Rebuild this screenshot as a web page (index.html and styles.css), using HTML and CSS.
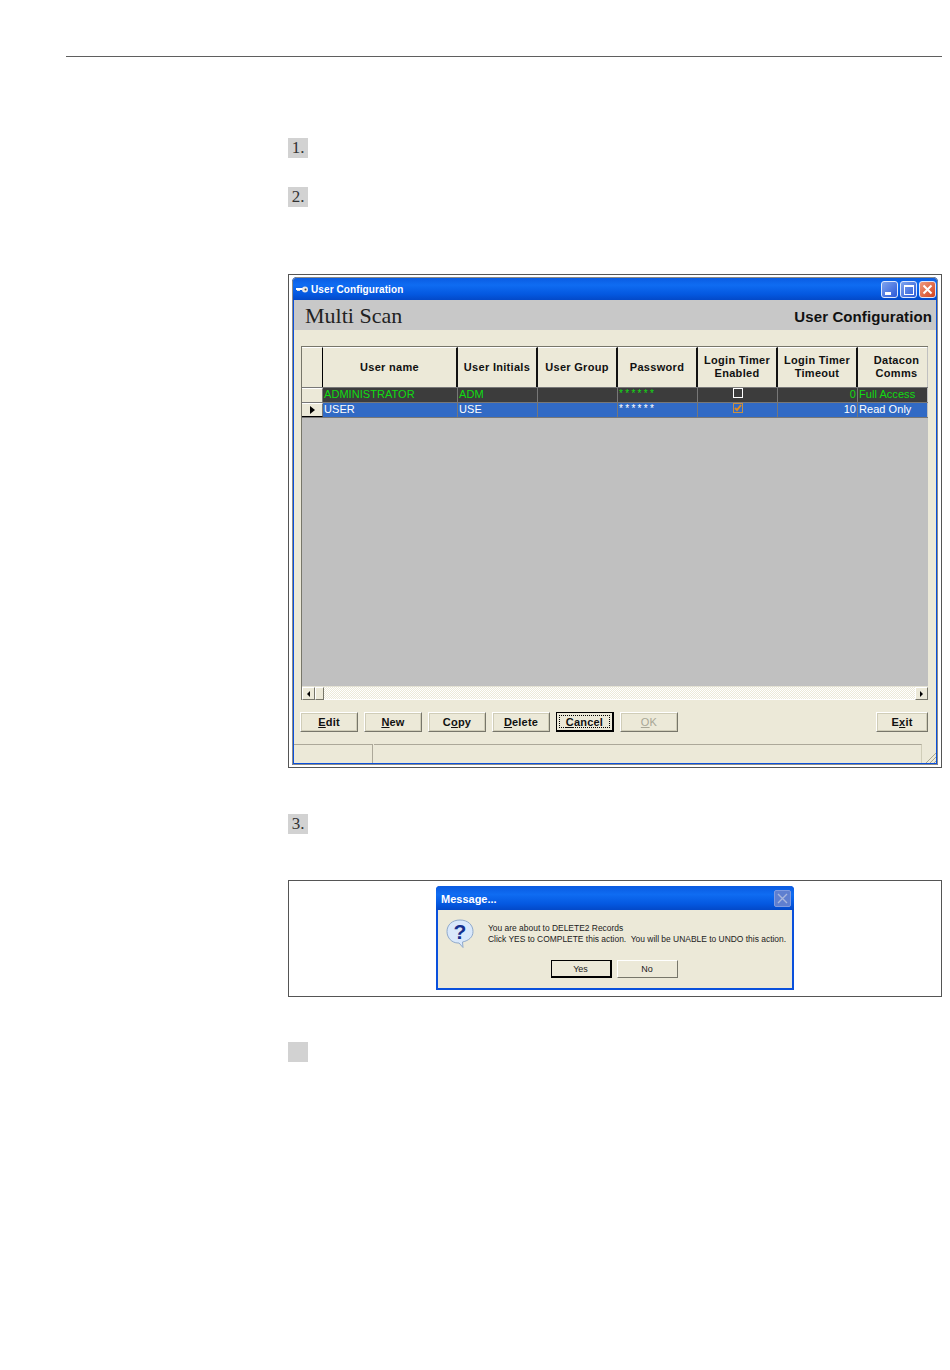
FILE: index.html
```html
<!DOCTYPE html>
<html lang="en">
<head>
    <meta charset="UTF-8">
    <meta name="viewport" content="width=device-width, initial-scale=1.0">
    <title>User Configuration</title>
    <link rel="stylesheet" href="styles.css">
</head>
<body>
    <hr class="top-rule">

    <main class="content">
        <div class="step step-1">1.</div>
        <div class="step step-2">2.</div>

        <div class="shot shot-config">
            <div class="window">
                <div class="titlebar">
                    <svg class="key-icon" width="12" height="7" viewBox="0 0 12 7">
                        <rect x="0" y="2" width="7" height="2" fill="#fff"/>
                        <rect x="1" y="4" width="3" height="1" fill="#ddd"/>
                        <circle cx="9" cy="3.500" r="3" fill="#e8e8e8"/>
                        <circle cx="9.500" cy="3.500" r="1" fill="#444"/>
                    </svg>
                    <span class="title-text">User Configuration</span>
                    <span class="win-btn"><i class="min-mark"></i></span>
                    <span class="win-btn"><i class="max-mark"></i></span>
                    <span class="win-btn win-close">
                        <svg width="11" height="11" viewBox="0 0 11 11"><path d="M1.500 1.500l8 8M9.500 1.500l-8 8" stroke="#fff" stroke-width="2"/></svg>
                    </span>
                </div>
                <div class="banner">
                    <span class="brand">Multi Scan</span>
                    <span class="banner-title">User Configuration</span>
                </div>
                <div class="window-body">
                    <div class="grid">
                        <div class="grid-row head-row">
                            <div class="sel"></div>
                            <div class="hcell">User name</div>
                            <div class="hcell">User Initials</div>
                            <div class="hcell">User Group</div>
                            <div class="hcell">Password</div>
                            <div class="hcell">Login Timer<br>Enabled</div>
                            <div class="hcell">Login Timer<br>Timeout</div>
                            <div class="hcell">Datacon<br>Comms</div>
                        </div>
                        <div class="grid-row data-row row-admin">
                            <div class="sel"></div>
                            <div class="cell">ADMINISTRATOR</div>
                            <div class="cell">ADM</div>
                            <div class="cell"></div>
                            <div class="cell stars">******</div>
                            <div class="cell center"><i class="check"></i></div>
                            <div class="cell right">0</div>
                            <div class="cell">Full Access</div>
                        </div>
                        <div class="grid-row data-row row-user">
                            <div class="sel sel-arrow">
                                <svg width="5" height="8" viewBox="0 0 5 8"><path d="M0 0l5 4-5 4z" fill="#000"/></svg>
                            </div>
                            <div class="cell">USER</div>
                            <div class="cell">USE</div>
                            <div class="cell"></div>
                            <div class="cell stars">******</div>
                            <div class="cell center">
                                <i class="check check-on">
                                    <svg width="8" height="8" viewBox="0 0 8 8"><path d="M1 4l2 2 4-5" fill="none" stroke="#e08a20" stroke-width="2"/></svg>
                                </i>
                            </div>
                            <div class="cell right">10</div>
                            <div class="cell">Read Only</div>
                        </div>
                        <div class="grid-empty"></div>
                        <div class="scrollbar">
                            <span class="scroll-btn"><svg width="3" height="6" viewBox="0 0 3 6"><path d="M3 0L0 3l3 3z" fill="#000"/></svg></span>
                            <span class="scroll-thumb"></span>
                            <span class="scroll-track"></span>
                            <span class="scroll-btn"><svg width="3" height="6" viewBox="0 0 3 6"><path d="M0 0l3 3-3 3z" fill="#000"/></svg></span>
                        </div>
                    </div>
                    <div class="actions">
                        <button class="btn"><u>E</u>dit</button>
                        <button class="btn"><u>N</u>ew</button>
                        <button class="btn">C<u>o</u>py</button>
                        <button class="btn"><u>D</u>elete</button>
                        <button class="btn btn-focus"><span><u>C</u>ancel</span></button>
                        <button class="btn btn-off"><u>O</u>K</button>
                        <button class="btn btn-exit">E<u>x</u>it</button>
                    </div>
                    <div class="statusbar">
                        <div class="status-a"></div>
                        <div class="status-b"></div>
                        <svg class="grip" width="11" height="11" viewBox="0 0 11 11"><path d="M11 1L1 11M11 5l-6 6M11 9l-2 2" stroke="#a8a690" fill="none"/></svg>
                    </div>
                </div>
            </div>
        </div>

        <div class="step step-3">3.</div>

        <div class="shot shot-message">
            <div class="dialog">
                <div class="dialog-title">
                    <span>Message...</span>
                    <span class="dialog-x">
                        <svg width="11" height="11" viewBox="0 0 11 11"><path d="M1 1l9 9M10 1l-9 9" stroke="#a9b7dd" stroke-width="1.400"/></svg>
                    </span>
                </div>
                <div class="dialog-body">
                    <div class="dialog-msg">
                        <svg class="ask-icon" width="30" height="30" viewBox="0 0 30 30">
                            <path d="M15 2C7 2 2 7 2 13.500S7 25 13 25l1 0 4 4.500-.500-5.500C24 22.500 28 19 28 13.500 28 7 23 2 15 2z" fill="#d9e8fb" stroke="#8fa9cc"/>
                            <text x="15" y="21" class="ask-mark">?</text>
                        </svg>
                        <p class="msg-text">You are about to DELETE2 Records<br>Click YES to COMPLETE this action.&nbsp; You will be UNABLE to UNDO this action.</p>
                    </div>
                    <div class="dialog-actions">
                        <button class="dbtn dbtn-default">Yes</button>
                        <button class="dbtn">No</button>
                    </div>
                </div>
            </div>
        </div>

        <div class="step step-4"></div>
    </main>
</body>
</html>
```

FILE: styles.css
```css
* {
    box-sizing: border-box;
}

html, body {
    margin: 0;
    padding: 0;
    background: #fff;
}

body {
    width: 950px;
    height: 1370px;
    overflow: hidden;
    font-family: "Liberation Sans", Arial, sans-serif;
}

.top-rule {
    height: 1px;
    margin: 56px 8px 0 66px;
    border: none;
    background: #5f5f5f;
}

.content {
    width: 654px;
    margin-left: 288px;
}

/* numbered step markers */
.step {
    width: 20px;
    height: 20px;
    background: #d2d2d2;
    color: #333;
    font: 17px/20px "Liberation Serif", "Times New Roman", serif;
    text-align: center;
}

.step-1 { margin-top: 81px; }
.step-2 { margin-top: 29px; }
.step-3 { margin-top: 46px; }
.step-4 { margin-top: 45px; }

.shot {
    border: 1px solid #555;
    background: #fff;
}

.shot-config {
    height: 494px;
    margin-top: 67px;
    padding: 2px 3px 2px 3px;
}

.shot-message {
    display: flex;
    justify-content: center;
    height: 117px;
    margin-top: 46px;
    padding: 5px 0 0 0;
}

/* main window */
.window {
    display: flex;
    flex-direction: column;
    height: 100%;
    border: 2px solid #0a50dc;
    border-top: none;
    border-radius: 5px 5px 0 0;
    background: #ece9d8;
    outline: 1px solid #8b8b8b;
    outline-offset: -1px;
}

.titlebar {
    display: flex;
    align-items: center;
    flex: none;
    height: 23px;
    margin: 0 -2px;
    padding: 2px 2px 0 4px;
    border-radius: 5px 5px 0 0;
    background: linear-gradient(#0a5ae0 0, #0f6cf2 35%, #0458e0 75%, #0349c8 100%);
    color: #fff;
    font-size: 10px;
    font-weight: bold;
}

.key-icon {
    margin-right: 3px;
}

.title-text {
    flex: 1;
    letter-spacing: 0.1px;
}

.win-btn {
    display: flex;
    align-items: center;
    justify-content: center;
    width: 17px;
    height: 17px;
    margin-left: 2px;
    border: 1px solid #dfe8fb;
    border-radius: 3px;
    background: linear-gradient(135deg, #7fa4ee, #2b59d8);
}

.win-close {
    background: linear-gradient(135deg, #ef9a7e, #d4431e);
}

.min-mark {
    width: 6px;
    height: 3px;
    margin-top: 7px;
    margin-right: 3px;
    background: #fff;
}

.max-mark {
    width: 10px;
    height: 10px;
    border: 1px solid #fff;
    border-top-width: 2px;
}

.banner {
    display: flex;
    align-items: center;
    justify-content: space-between;
    flex: none;
    height: 30px;
    padding: 2px 4px 0 11px;
    background: #c8c8c8;
}

.brand {
    color: #222;
    font: 22px "Liberation Serif", "Times New Roman", serif;
}

.banner-title {
    color: #111;
    font-size: 15px;
    font-weight: bold;
    letter-spacing: 0.1px;
}

.window-body {
    display: flex;
    flex-direction: column;
    flex: 1;
    padding: 16px 0 0 7px;
}

/* data grid */
.grid {
    display: flex;
    flex-direction: column;
    flex: none;
    width: 627px;
    height: 354px;
    border-top: 1px solid #77766a;
    border-left: 1px solid #77766a;
    background: #c0c0c0;
}

.grid-row {
    display: grid;
    flex: none;
    grid-template-columns: 21px 135px repeat(5, 80px) 69px;
}

.head-row {
    height: 41px;
    border-bottom: 1px solid #777;
}

.data-row {
    height: 15px;
    border-bottom: 1px solid #777;
    color: #fff;
    font-size: 11px;
    line-height: 13px;
}

.sel {
    border-top: 1px solid #fff;
    border-right: 1px solid #000;
    background: #ece9d8;
}

.data-row .sel {
    border-right-color: #777;
}

.sel-arrow {
    display: flex;
    align-items: center;
    justify-content: center;
    border-bottom: 1px solid #000;
}

.hcell {
    display: flex;
    align-items: center;
    justify-content: center;
    padding-bottom: 1px;
    border-top: 1px solid #fff;
    border-right: 2px solid #111;
    background: #ece9d8;
    color: #111;
    font-size: 11px;
    font-weight: bold;
    line-height: 13px;
    text-align: center;
    letter-spacing: 0.3px;
}

.hcell:last-child {
    padding-left: 8px;
    border-right: none;
}

.cell {
    overflow: hidden;
    padding-left: 1px;
    border-right: 1px solid #777;
    white-space: nowrap;
    letter-spacing: 0.05px;
}

.cell:last-child {
    border-right: none;
}

.row-admin .cell {
    background: #3c3c3c;
    color: #10dc10;
}

.row-user .cell {
    background: #316ac5;
}

.center {
    display: flex;
    justify-content: center;
    padding: 0;
}

.right {
    padding-right: 1px;
    text-align: right;
}

.stars {
    font-size: 10px;
    line-height: 11px;
    letter-spacing: 2.3px;
}

.check {
    display: flex;
    align-items: center;
    justify-content: center;
    width: 10px;
    height: 10px;
    border: 1px solid #fff;
    background: #3c3c3c;
}

.check-on {
    border-color: #c89040;
    background: #316ac5;
}

.grid-empty {
    flex: 1;
}

.scrollbar {
    display: flex;
    flex: none;
    height: 14px;
    border-top: 1px solid #e4e2d4;
    border-bottom: 1px solid #fff;
}

.scroll-btn, .scroll-thumb {
    display: flex;
    align-items: center;
    justify-content: center;
    flex: none;
    width: 13px;
    height: 13px;
    border: 1px solid;
    border-color: #fff #77766a #77766a #fff;
    background: #ece9d8;
}

.scroll-thumb {
    width: 9px;
}

.scroll-track {
    flex: 1;
    background: repeating-conic-gradient(#fff 0 25%, #ece9d8 0 50%) 0 0 / 2px 2px;
}

/* buttons under the grid */
.actions {
    display: flex;
    flex: none;
    gap: 6px;
    width: 628px;
    margin: 12px 0 0 -1px;
}

.btn {
    width: 58px;
    height: 20px;
    padding: 0;
    border: 1px solid;
    border-color: #fff #77766a #77766a #fff;
    outline: 1px solid #d0cdb8;
    outline-offset: -2px;
    background: #ece9d8;
    color: #111;
    font-family: "Liberation Sans", Arial, sans-serif;
    font-size: 11px;
    font-weight: bold;
    letter-spacing: 0.2px;
}

.btn-focus {
    padding: 2px;
    border: 1px solid #000;
    border-width: 1px 2px 2px 1px;
    outline: none;
}

.btn-focus span {
    display: block;
    height: 100%;
    border: 1px dotted #000;
    line-height: 12px;
}

.btn-off {
    color: #a8a696;
    font-weight: normal;
}

.btn-exit {
    width: 52px;
    margin-left: auto;
}

.statusbar {
    position: relative;
    display: flex;
    flex: 1;
    margin: 12px 0 0 -7px;
}

.status-a {
    width: 79px;
    border-top: 1px solid #aca899;
    border-right: 1px solid #aca899;
}

.status-b {
    width: 548px;
    margin-left: 1px;
    border-top: 1px solid #aca899;
    border-right: 1px solid #d0cdb8;
}

.grip {
    position: absolute;
    right: 0;
    bottom: 0;
}

/* message box */
.dialog {
    display: flex;
    flex-direction: column;
    width: 358px;
    height: 104px;
    border: 2px solid #0a50dc;
    border-top: none;
    border-radius: 4px 4px 0 0;
    background: #ece9d8;
}

.dialog-title {
    display: flex;
    align-items: center;
    justify-content: space-between;
    flex: none;
    height: 24px;
    margin: 0 -2px;
    padding: 2px 3px 0 5px;
    border-radius: 4px 4px 0 0;
    background: linear-gradient(#0a5ae0 0, #0f6cf2 35%, #0458e0 75%, #0349c8 100%);
    color: #fff;
    font-size: 11px;
    font-weight: bold;
}

.dialog-x {
    display: flex;
    align-items: center;
    justify-content: center;
    width: 17px;
    height: 17px;
    margin-top: -2px;
    border: 1px solid #7f9be0;
    border-radius: 2px;
    background: #5f7fd0;
}

.dialog-body {
    flex: 1;
    padding: 8px 0 0 7px;
}

.dialog-msg {
    display: flex;
    height: 42px;
}

.ask-icon {
    flex: none;
}

.ask-mark {
    fill: #15308f;
    font-family: "Liberation Sans", Arial, sans-serif;
    font-size: 21px;
    font-weight: bold;
    text-anchor: middle;
}

.msg-text {
    margin: 5px 0 0 13px;
    color: #222;
    font-size: 8.45px;
    line-height: 11px;
    white-space: nowrap;
}

.dialog-actions {
    display: flex;
    justify-content: center;
    gap: 5px;
    margin-left: -9px;
}

.dbtn {
    width: 61px;
    height: 18px;
    padding: 0;
    border: 1px solid;
    border-color: #fff #77766a #77766a #fff;
    background: #ece9d8;
    color: #222;
    font-family: "Liberation Sans", Arial, sans-serif;
    font-size: 9px;
}

.dbtn-default {
    border: 1px solid #000;
    border-width: 1px 2px 2px 1px;
}
```
